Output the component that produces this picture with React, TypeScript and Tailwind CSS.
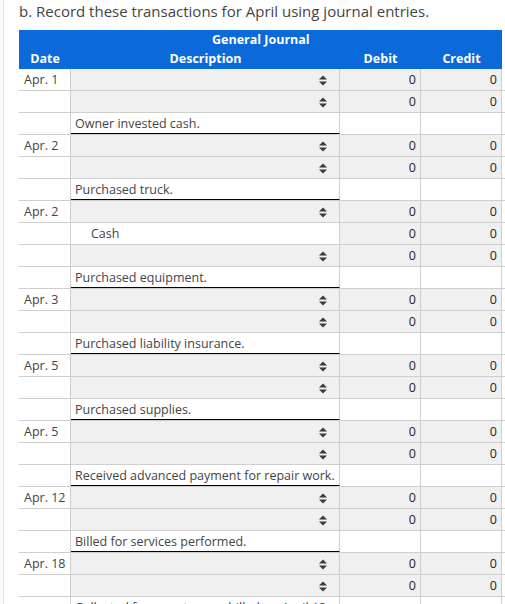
type Row =
  | { kind: "entry"; date?: string }
  | { kind: "credit"; label: string }
  | { kind: "memo"; text: string };

const entry = (date?: string): Row => ({ kind: "entry", date });
const memo = (text: string): Row => ({ kind: "memo", text });

const rows: Row[] = [
  entry("Apr. 1"),
  entry(),
  memo("Owner invested cash."),
  entry("Apr. 2"),
  entry(),
  memo("Purchased truck."),
  entry("Apr. 2"),
  { kind: "credit", label: "Cash" },
  entry(),
  memo("Purchased equipment."),
  entry("Apr. 3"),
  entry(),
  memo("Purchased liability insurance."),
  entry("Apr. 5"),
  entry(),
  memo("Purchased supplies."),
  entry("Apr. 5"),
  entry(),
  memo("Received advanced payment for repair work."),
  entry("Apr. 12"),
  entry(),
  memo("Billed for services performed."),
  entry("Apr. 18"),
  entry(),
];

// little up/down arrows of the native select
function SelectArrows() {
  return (
    <svg width="8" height="11" viewBox="0 0 8 11" className="mt-[1px] fill-[#3a3a3a]">
      <path d="M4 0.5 L8 4.5 H0 Z" />
      <path d="M4 10.5 L8 6.5 H0 Z" />
    </svg>
  );
}

function Amount({ show }: { show: boolean }) {
  return (
    <div
      className={`w-[81px] shrink-0 border-r-[1.5px] border-[#cfcfcf] pr-[4px] text-right ${
        show ? "bg-[#f0f0f0] text-[#222]" : "bg-white"
      }`}
    >
      {show ? "0" : ""}
    </div>
  );
}

function JournalRow({ row }: { row: Row }) {
  const hasAmounts = row.kind !== "memo";
  return (
    <div className="flex h-[22px] shrink-0 border-b-[1.5px] border-[#cfcfcf] leading-[22px]">
      <div className="w-[52px] shrink-0 border-r-[1.5px] border-[#cfcfcf] bg-white pl-[5px] text-[#444]">
        {row.kind === "entry" ? row.date : ""}
      </div>
      {row.kind === "entry" && (
        <div className="flex w-[269px] shrink-0 items-center justify-end border-r-[1.5px] border-[#cfcfcf] bg-[#f0f0f0] pr-[12px]">
          <SelectArrows />
        </div>
      )}
      {row.kind === "credit" && (
        <div className="w-[269px] shrink-0 border-r-[1.5px] border-[#cfcfcf] bg-white pl-[20px] text-[#444]">
          {row.label}
        </div>
      )}
      {row.kind === "memo" && (
        <div className="h-[21px] w-[269px] shrink-0 border-r-[1.5px] border-b border-r-[#cfcfcf] border-b-black bg-white pl-[4px] whitespace-nowrap text-[#444]">
          {row.text}
        </div>
      )}
      <Amount show={hasAmounts} />
      <Amount show={hasAmounts} />
    </div>
  );
}

export default function App() {
  return (
    <div className="flex h-[604px] w-[505px] overflow-hidden bg-white font-['Open_Sans',sans-serif] text-[12.5px]">
      <div className="w-[4px] shrink-0 border-r border-[#e6e6e6] bg-[#fafafa]" />
      <div className="flex min-w-0 flex-1 flex-col pl-[15px]">
        <div className="h-[30px] shrink-0 text-[15px] leading-[22px] whitespace-nowrap text-[#444]">
          b. Record these transactions for April using journal entries.
        </div>
        <div className="flex h-[39px] w-[483px] shrink-0 flex-col bg-[#0b69d9] leading-[19px] font-bold text-white">
          <div className="h-[19px] pl-[193px]">General Journal</div>
          <div className="flex">
            <div className="w-[52px] text-center">Date</div>
            <div className="w-[269px] text-center">Description</div>
            <div className="w-[81px] text-center">Debit</div>
            <div className="w-[81px] text-center">Credit</div>
          </div>
        </div>
        {rows.map((row, i) => (
          <JournalRow key={i} row={row} />
        ))}
        <div className="flex h-[22px] shrink-0 leading-[22px]">
          <div className="w-[52px] shrink-0 border-r-[1.5px] border-[#cfcfcf]" />
          <div className="w-[269px] shrink-0 border-r-[1.5px] border-[#cfcfcf] pl-[4px] whitespace-nowrap text-[#444]">
            Collected from customers billed on April 12.
          </div>
          <Amount show={false} />
          <Amount show={false} />
        </div>
      </div>
    </div>
  );
}
